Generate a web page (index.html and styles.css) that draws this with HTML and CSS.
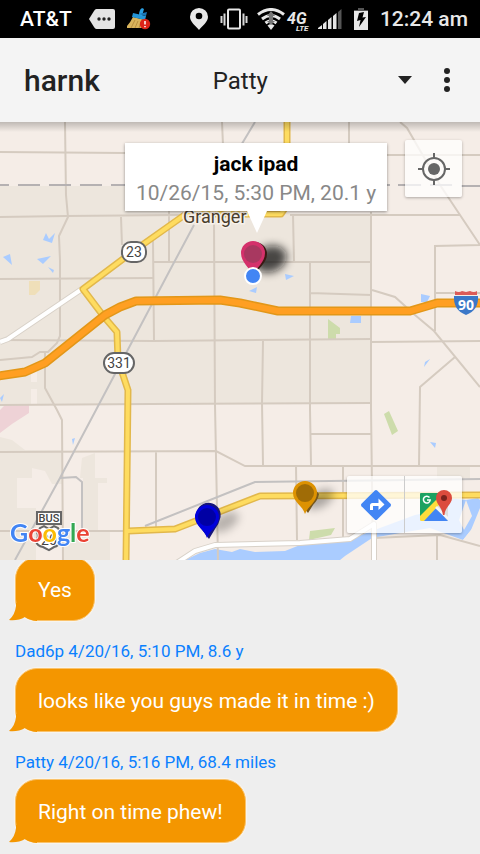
FILE: index.html
```html
<!DOCTYPE html>
<html lang="en">
<head>
<meta charset="utf-8">
<meta name="viewport" content="width=device-width, initial-scale=1">
<title>harnk</title>
<link rel="stylesheet" href="styles.css">
</head>
<body>
<div class="status">
  <span class="carrier">AT&amp;T</span>
  <div class="notices">
    <svg width="26" height="20" viewBox="0 0 26 20" aria-hidden="true"><path d="M7.500 0H24a2 2 0 0 1 2 2V18a2 2 0 0 1-2 2H7.500Q6 20 5 18L0 10L5 2Q6 0 7.500 0Z" fill="#e4e4e4"/><g fill="#222"><circle cx="10" cy="10" r="1.700"/><circle cx="15" cy="10" r="1.700"/><circle cx="20" cy="10" r="1.700"/></g></svg>
    <svg width="24" height="24" viewBox="0 0 24 24" aria-hidden="true"><path d="M6 10Q3 16 0 19V21H16L18 13Z" fill="#d9b45c"/><path d="M8 13L4 21M11 14L8 21M14 15L12 21" stroke="#b98f3e" stroke-width="1"/><path d="M6 6L19 9L18 13L5 10Z" fill="#2496d8"/><path d="M12 8Q12 3 15 1L17 2L15 9" fill="#2a9fe2"/><path d="M12 7L20 5L19 9Z" fill="#1b76b6"/><circle cx="18" cy="17" r="5.200" fill="#dc2418"/><path d="M18 14V17.500M18 19V20.200" stroke="#fff" stroke-width="1.500"/></svg>
  </div>
  <div class="signals">
    <svg width="18" height="22" viewBox="0 0 18 22" aria-hidden="true"><path d="M9 0a9 8.700 0 0 1 9 8.700C18 14 12 18 9 22C6 18 0 14 0 8.700A9 8.700 0 0 1 9 0Z" fill="#e8e8e8"/><circle cx="9" cy="8" r="3.300"/></svg>
    <svg width="28" height="22" viewBox="0 0 28 22" aria-hidden="true"><rect x="8" y="1.500" width="12" height="19" rx="1" fill="none" stroke="#e8e8e8" stroke-width="2"/><g fill="#d8d8d8"><rect x="0.500" y="8" width="2" height="7"/><rect x="3.500" y="5.500" width="2" height="12"/><rect x="22.500" y="5.500" width="2" height="12"/><rect x="25.500" y="8" width="2" height="7"/></g></svg>
    <svg class="wifi" width="30" height="22" viewBox="0 0 30 22" aria-hidden="true"><g fill="none" stroke="#e8e8e8" stroke-width="3"><path d="M2 6.500Q15-3.500 28 6.500"/><path d="M6 11Q15 4 24 11"/><path d="M9.500 15Q15 10.500 20.500 15"/></g><path d="M11.500 17.500Q15 14.500 18.500 17.500L15 22Z" fill="#e8e8e8"/><path d="M15 3L19 8H17V13H19L15 17L11 13H13V8H11Z" fill="#777"/></svg>
    <svg class="lte" width="25" height="22" viewBox="0 0 25 22" aria-hidden="true"><text x="0" y="15" class="lte-big">4G</text><text x="9" y="22" class="lte-small">LTE</text></svg>
    <svg width="24" height="20" viewBox="0 0 24 20" aria-hidden="true"><g fill="#e4e4e4"><path d="M0 20V19L4 16V20Z"/><path d="M5 20V15L8.500 12V20Z"/><path d="M10 20V11L13.500 8V20Z"/><path d="M15 20V7L18.500 4V20Z"/></g><path d="M20 20V3L23.500 0V20Z" fill="#555"/></svg>
    <svg width="14" height="22" viewBox="0 0 14 22" aria-hidden="true"><path d="M4 0H10V2H14V5H0V2H4Z" fill="#555"/><path d="M0 3H14V22H0Z" fill="#e8e8e8"/><path d="M5 5L10 4L8.500 9.500L12 9L5 19L6.500 12L3 13Z"/></svg>
    <span>12:24 am</span>
  </div>
</div>

<header class="appbar">
  <h1 class="title">harnk</h1>
  <div class="picker">
    <select class="picker-select" aria-label="Contact"><option>Patty</option></select>
    <svg class="picker-arrow" width="14" height="8" viewBox="0 0 14 8" aria-hidden="true"><path d="M0 0H14L7 8Z" fill="#222"/></svg>
  </div>
  <button class="more" type="button" aria-label="More options"><svg width="6" height="24" viewBox="0 0 6 24"><g fill="#222"><circle cx="3" cy="3" r="3"/><circle cx="3" cy="12" r="3"/><circle cx="3" cy="21" r="3"/></g></svg></button>
</header>

<main class="map">
  <svg class="canvas" viewBox="0 122 480 438" preserveAspectRatio="xMidYMid slice" role="img" aria-label="Map">
    <defs>
      <filter id="soft" x="-50%" y="-50%" width="200%" height="200%"><feGaussianBlur stdDeviation="4"/></filter>
    </defs>
    <rect y="122" width="480" height="438" fill="#f5ede7"/>
    <path d="M0 186H210L293 215H371V403L0 405Z" fill="#ede6dd"/>
    <path d="M0 437L12 440L25 450H62V484H52L45 471L32 468V478H17V508H36V560H0ZM82 458L95 453V478H107V483H98V531H110V560H62V531H83V478H80Z" fill="#ede6dd"/>
    <path d="M31 371H37V382H31ZM31 389H37V404H31Z" fill="#f5ede7"/>
    <path d="M437 467H470V480H437Z" fill="#ede6dd"/>
    <path d="M0 410L5 405H29V413L12 424L0 433Z" fill="#eed2d6"/>
    <path d="M29 281H40V290L35 295H29Z" fill="#efdfb9"/>
    <g fill="#cddcab">
      <path d="M328 319L340 328V334H336V339H328Z"/><path d="M384 414L389 411L398 431L392 435Z"/><path d="M310 531L335 528L331 535L309 540Z"/>
    </g>
    <g fill="#aaccff">
      <path d="M185 560L200 553L215 549L232 552L240 549L255 552L285 551L300 545L330 543L350 539L380 528L415 515L440 510L448 498L466 500L478 498L480 500V520L471 530L463 540L430 528L400 533L372 538L345 556L340 560Z"/>
      <path d="M351 316H361V323H350ZM421 294L430 296L427 302L421 302ZM425 362L430 359L424 367ZM430 442L436 443L435 448ZM285 274L294 276L286 280ZM249 291L257 287L256 293ZM43 240L46 233L49 239L55 233L52 243ZM3 257L10 254L12 265ZM37 259L51 256L43 264ZM48 267L54 270L53 273ZM0 398L4 394L2 402ZM72 439L75 438L73 445Z"/>
    </g>
    <path d="M466 500L472 516L464 530L459 520ZM471 530L480 508V545L463 540Z" fill="#f5ede7"/>
    <g fill="none" stroke="#d5cbc0" stroke-width="2">
      <path d="M65 122L66 195L68 217L59 236L60 260V336L57 343L48 352H40L32 357L0 360"/>
      <path d="M45 352V388L57 410L62 420L63 560"/>
      <path d="M0 152L125 153L372 155H480M0 217L66 216L180 215M121 217L122 245M169 200V262M153 240L154 340"/>
      <path d="M153 262H371M0 279L153 278M222 122L223 145M349 122V145M293 215L294 262M214 222L215 405L218 560"/>
      <path d="M371 212V410L373 560M290 215H460M435 331V246L480 245M400 122L407 128L440 185L480 245"/>
      <path d="M310 262V410L311 465M310 293L371 295M372 290L395 297L415 315L434 331L480 387M435 293H480"/>
      <path d="M0 340L154 341L371 339M371 342L480 341M263 341L262 403L263 465M455 357L420 387L419 465"/>
      <path d="M0 405L150 404L371 403M0 452L216 451L245 466H480M156 452V530M0 531H125M310 434H371"/>
      <path d="M296 466L297 540M343 466V538M374 538L440 535L480 546M437 536V560"/>
    </g>
    <g fill="none" stroke="#c3c1c1" stroke-width="2">
      <path d="M194 225L170 270L96 410L60 478L15 560M60 478L76 477L82 482V530M145 526L240 488L255 482L480 479M255 122L240 147"/>
    </g>
    <path d="M0 185H9M18 185H40M49 185H71M80 185H102M111 185H133M375 185H390M398 185H421M430 185H452M461 186H480" stroke="#b5b1b2" stroke-width="2"/>
    <g fill="none" stroke-linejoin="round">
      <g stroke="#d8d1c8" stroke-width="6"><path d="M0 342L8 339L82 289M175 564L195 551L215 545L300 543L350 539L374 524V562"/></g>
      <g stroke="#fff" stroke-width="4"><path d="M0 342L8 339L82 289M175 564L195 551L215 545L300 543L350 539L374 524V562"/></g>
      <g stroke="#e2b84b" stroke-width="7"><path d="M287 120V205L281 214H186L135 250L83 289L105 318L117 332L118 360L128 390L126 562M128 531L175 529L260 496L482 495"/></g>
      <g stroke="#fedc60" stroke-width="4"><path d="M287 120V205L281 214H186L135 250L83 289L105 318L117 332L118 360L128 390L126 562M128 531L175 529L260 496L482 495"/></g>
      <path d="M-2 376L25 372L45 363L105 315L120 307L136 301L220 300L240 303L278 311H410L437 303H482" stroke="#e29719" stroke-width="9"/>
      <path d="M-2 376L25 372L45 363L105 315L120 307L136 301L220 300L240 303L278 311H410L437 303H482" stroke="#ff9f22" stroke-width="6"/>
    </g>

    <text x="183" y="223" class="place">Granger</text>

    <g fill="#fff" stroke="#666" stroke-width="2">
      <rect x="122" y="242" width="24" height="20" rx="9"/><rect x="104" y="353" width="30" height="20" rx="10"/>
      <path d="M40 528L44 526L49 529L54 526L58 528L60 532Q58 537 60 541Q59 546 54 547L49 550L43 547Q37 546 36 541Q39 537 37 532Z"/>
      <rect x="37" y="512" width="24" height="12"/>
    </g>
    <g class="route"><text x="134" y="257">23</text><text x="119" y="368">331</text><text x="49" y="545">20</text></g>
    <text x="49" y="522" class="route-small">BUS</text>
    <path d="M455 291Q459 293 462 291L466 292L470 291Q474 293 477 291V295H455Z" fill="#dc5b58"/>
    <path d="M454 296H478Q479 310 466 315Q453 310 454 296Z" fill="#3b78c8"/>
    <text x="466" y="310" class="interstate">90</text>

    <g fill="#111" filter="url(#soft)">
      <ellipse cx="270" cy="259" rx="17" ry="13" opacity=".75" transform="rotate(-20 270 259)"/>
      <ellipse cx="225" cy="522" rx="15" ry="8" opacity=".25" transform="rotate(-30 225 522)"/>
      <ellipse cx="320" cy="499" rx="15" ry="8" opacity=".3" transform="rotate(-30 320 499)"/>
    </g>
    <path d="M254 277C251 268 243 264 243 254A12 12 0 0 1 267 254C267 264 257 268 254 277Z" fill="#3a1a14"/>
    <path d="M253 276C250 267 241 263 241 253A12 12 0 0 1 265 253C265 263 256 267 253 276Z" fill="#d4316b"/><circle cx="253" cy="254" r="9" fill="#a83860"/>
    <path d="M209 539L197 523Q194 516 197 511A12 12 0 0 1 220 519Q219 524 215 529Z" fill="#15157a"/>
    <path d="M207 538C205 530 195 526 195 517A12 12 0 0 1 219 517C219 526 210 530 207 538Z" fill="#0000dc"/><circle cx="207" cy="517" r="9" fill="#0000a4"/>
    <path d="M308 513L297 499A12 12 0 0 1 319 494Q318 500 313 505Z" fill="#75571d"/>
    <path d="M305 514C303 506 293 502 293 493A12 12 0 0 1 317 493C317 502 308 506 305 514Z" fill="#dd9202"/><circle cx="305" cy="493" r="9" fill="#a06c06"/>
    <circle cx="253" cy="276" r="8" fill="#4285f4" stroke="#fff" stroke-width="2"/>

    <text x="10" y="542" class="google"><tspan fill="#4285f4">G</tspan><tspan fill="#ea4335">o</tspan><tspan fill="#fbbc05">o</tspan><tspan fill="#4285f4">g</tspan><tspan fill="#34a853">l</tspan><tspan fill="#ea4335">e</tspan></text>
  </svg>

  <section class="callout">
    <strong class="callout-title">jack ipad</strong>
    <span class="callout-text">10/26/15, 5:30 PM, 20.1 y</span>
    <svg class="callout-tip" width="20" height="22" viewBox="0 0 20 22" aria-hidden="true"><path d="M0 0H20L10 22Z" fill="#fff"/></svg>
  </section>

  <div class="controls controls-top">
    <button class="control" type="button" aria-label="My location"><svg width="32" height="32" viewBox="0 0 32 32"><g fill="none" stroke="#666" stroke-width="2"><circle cx="16" cy="16" r="11"/><path d="M16 0V5M16 27V32M0 16H5M27 16H32"/></g><circle cx="16" cy="16" r="6" fill="#666"/></svg></button>
  </div>
  <div class="controls controls-bottom">
    <button class="control" type="button" aria-label="Directions"><svg width="30" height="30" viewBox="0 0 30 30"><path d="M13.800.5Q15-.5 16.200.5L29.500 13.800Q30.500 15 29.500 16.200L16.200 29.500Q15 30.500 13.800 29.500L.5 16.200Q-.5 15 .5 13.800Z" fill="#4285f4"/><path d="M9 20V15.500Q9 13 11.500 13H17.500V8.500L23.500 14.500L17.500 20V16H12V20Z" fill="#fff"/></svg></button>
    <button class="control" type="button" aria-label="Open in Google Maps"><svg width="34" height="34" viewBox="0 0 34 34"><path d="M2 5H29V33H2Q1 33 1 32V6Q1 5 2 5Z" fill="#dcdcdc"/><path d="M2 5H21L20 13L1 32V6Q1 5 2 5Z" fill="#1da261"/><path d="M2 33L16 19L29 33Z" fill="#4285f4"/><path d="M1 28L20 9V17L5 33H2L1 32Z" fill="#ffdc3c"/><path d="M16 20L18 18L29 29V32Z" fill="#f5f5f5"/><path d="M24 27C23 19 17 16 17 10A8 8 0 0 1 33 10C33 16 26 19 25.500 27Z" fill="#dc4b3e"/><circle cx="25" cy="10" r="3" fill="#7b231e"/><path d="M10.500 9.500A3.400 3.400 0 1 0 11.200 12H8" fill="none" stroke="#fff" stroke-width="1.500"/></svg></button>
  </div>
</main>

<section class="chat" aria-label="Messages">
  <article class="message">
    <p class="bubble">Yes<svg class="tail" width="28" height="18" viewBox="0 0 28 18" aria-hidden="true"><path d="M7 0V3Q6 12 0 17Q9 18 16 14Q20 17 28 18V0Z" fill="#f49600"/></svg></p>
  </article>
  <article class="message">
    <p class="meta">Dad6p 4/20/16, 5:10 PM, 8.6 y</p>
    <p class="bubble">looks like you guys made it in time :)<svg class="tail" width="28" height="18" viewBox="0 0 28 18" aria-hidden="true"><path d="M7 0V3Q6 12 0 17Q9 18 16 14Q20 17 28 18V0Z" fill="#f49600"/></svg></p>
  </article>
  <article class="message">
    <p class="meta">Patty 4/20/16, 5:16 PM, 68.4 miles</p>
    <p class="bubble">Right on time phew!<svg class="tail" width="28" height="18" viewBox="0 0 28 18" aria-hidden="true"><path d="M7 0V3Q6 12 0 17Q9 18 16 14Q20 17 28 18V0Z" fill="#f49600"/></svg></p>
  </article>
</section>
</body>
</html>
```
FILE: styles.css
```css
* { box-sizing: border-box; }

body {
  margin: 0;
  height: 100vh;
  display: flex;
  flex-direction: column;
  overflow: hidden;
  font-family: Roboto, "Liberation Sans", sans-serif;
  background: #eee;
}

h1, p { margin: 0; }
svg { display: block; }
button { border: 0; padding: 0; background: none; }

.status {
  flex: none;
  height: 38px;
  padding: 0 12px 0 20px;
  display: flex;
  align-items: center;
  gap: 17px;
  background: #000;
  color: #e8e8e8;
  font-size: 21px;
  font-weight: 500;
}
.carrier { color: #fff; }
.notices { display: flex; align-items: center; gap: 12px; }
.signals { margin-left: auto; display: flex; align-items: center; gap: 12px; }
.wifi { margin-left: -4px; }
.lte { margin-left: -11px; align-self: flex-end; overflow: visible; }
.signals .lte + svg { margin-left: -6px; }
.lte-big { font: italic 700 16px Roboto, sans-serif; fill: #e8e8e8; }
.lte-small { font: italic 700 8px Roboto, sans-serif; fill: #e8e8e8; }

.appbar {
  flex: none;
  height: 84px;
  padding: 0 24px;
  display: flex;
  align-items: center;
  background: #f4f4f4;
  color: #222;
}
.title { width: 43%; font-size: 30px; font-weight: 500; }
.picker { flex: 1; display: grid; align-items: center; }
.picker-select {
  grid-area: 1 / 1;
  appearance: none;
  width: 100%;
  height: 48px;
  padding: 2px 24px 0 3px;
  border: 0;
  background: none;
  font: 24px Roboto, "Liberation Sans", sans-serif;
  color: #222;
}
.picker-arrow { grid-area: 1 / 1; justify-self: end; pointer-events: none; }
.more { width: 44px; height: 48px; display: grid; justify-content: end; align-content: center; padding-right: 6px; }

.map { flex: 149 1 0; min-height: 0; position: relative; overflow: hidden; }
.map::before {
  content: "";
  position: absolute;
  inset: 0 0 auto;
  height: 10px;
  z-index: 1;
  background: linear-gradient(rgba(0, 0, 0, .22), rgba(0, 0, 0, 0));
}
.canvas { width: 100%; height: 100%; }
.place { font: 18px Roboto, sans-serif; fill: #4a3d2c; stroke: #f7f1ea; stroke-width: 3px; paint-order: stroke; }
.route { font: 14px Roboto, sans-serif; fill: #444; text-anchor: middle; }
.route-small { font: 500 11px Roboto, sans-serif; fill: #444; text-anchor: middle; }
.interstate { font: 700 14px "Open Sans", sans-serif; fill: #fff; text-anchor: middle; }
.google { font: 700 25px Lato, sans-serif; stroke: #fff; stroke-width: 2px; paint-order: stroke; }

.callout {
  position: absolute;
  top: 21px;
  left: 125px;
  padding: 7px 11px 4px;
  display: grid;
  justify-items: center;
  gap: 1px;
  line-height: 28px;
  background: #fff;
  box-shadow: 0 1px 3px rgba(0, 0, 0, .4);
}
.callout-title { font-size: 21px; font-weight: 700; color: #000; }
.callout-text { font-size: 21px; color: #888; white-space: nowrap; }
.callout-tip { position: absolute; top: 100%; left: 50%; margin-left: -9px; }

.controls {
  position: absolute;
  right: 18px;
  display: flex;
  border-radius: 2px;
  background: rgba(255, 255, 255, .75);
  box-shadow: 0 1px 3px rgba(0, 0, 0, .3);
}
.controls-top { top: 18px; }
.controls-bottom { bottom: 27px; }
.control { width: 57px; height: 57px; display: grid; place-items: center; }
.control + .control { width: 58px; border-left: 1px solid #ccc; padding-left: 4px; }

.chat {
  flex: 100 1 0;
  min-height: 0;
  overflow: hidden;
  display: flex;
  flex-direction: column;
  justify-content: flex-end;
  gap: 19px;
  padding: 0 15px;
}
.message { flex: none; display: grid; justify-items: start; gap: 6px; }
.message:last-child { margin-bottom: 11px; }
.meta { font-size: 17px; line-height: 22px; color: #0a80ff; }
.bubble {
  position: relative;
  padding: 18px 22px 16px;
  border: 1px solid #fac26a;
  line-height: 28px;
  font-size: 21px;
  color: #fff;
  background: #f49600;
  border-radius: 22px;
  box-shadow: 0 0 1px 1px rgba(255, 250, 240, .6);
}
.tail { position: absolute; left: -7px; bottom: -1px; }
```
